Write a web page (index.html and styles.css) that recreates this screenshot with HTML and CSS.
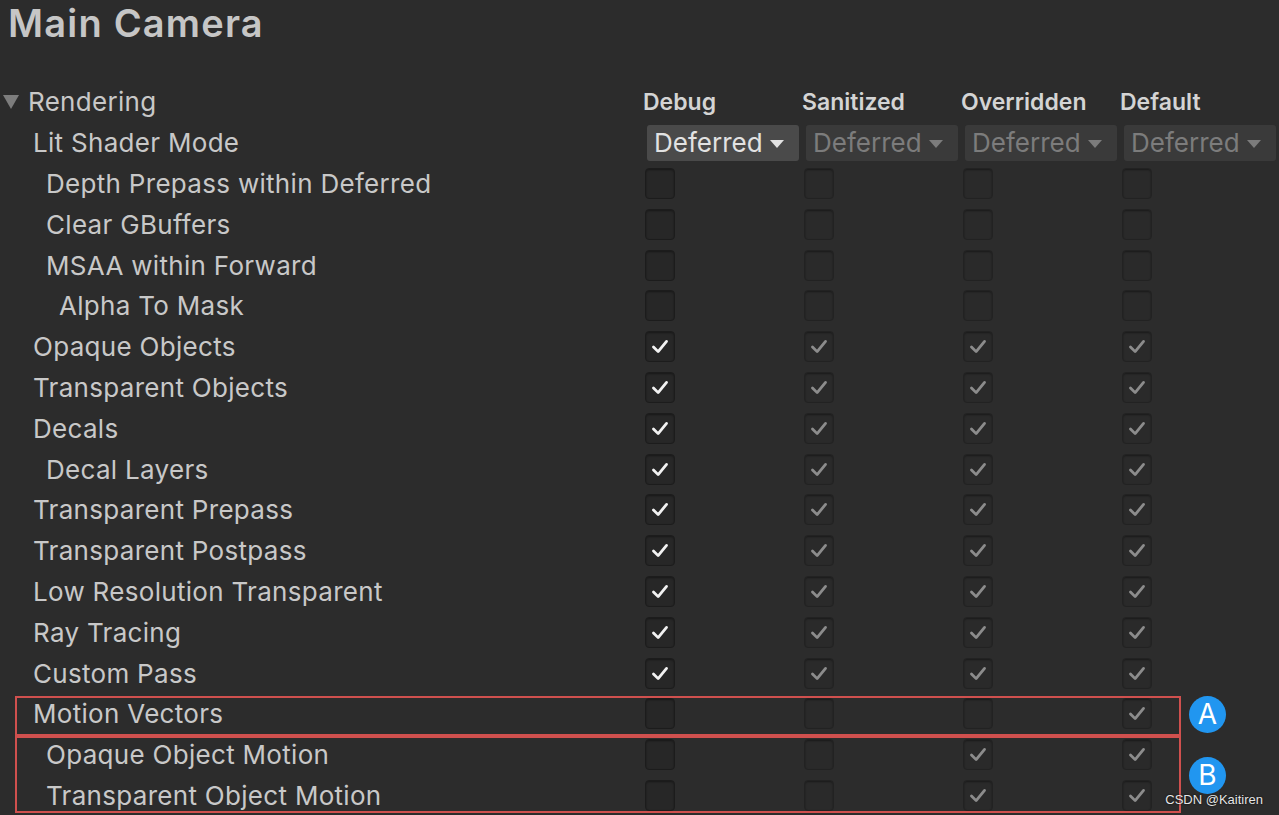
FILE: index.html
```html
<!DOCTYPE html>
<html lang="en">
<head>
  <meta charset="UTF-8" />
  <title>Main Camera - Frame Settings</title>
  <link rel="stylesheet" href="styles.css">
</head>
<body>
  <svg width="0" height="0" class="defs">
    <symbol id="chk" viewBox="0 0 30 30">
      <polyline points="8,15.5 13,20.5 22,9.5" fill="none" stroke-width="3" stroke-linecap="round" stroke-linejoin="round" />
    </symbol>
  </svg>

  <h1 class="title">Main Camera</h1>

  <div class="inspector">
    <div class="row head">
      <div class="label foldout"><span class="fold"></span>Rendering</div>
      <div class="col-title">Debug</div>
      <div class="col-title">Sanitized</div>
      <div class="col-title">Overridden</div>
      <div class="col-title">Default</div>
    </div>

    <div class="row">
      <div class="label lv1">Lit Shader Mode</div>
      <div class="cell"><div class="dropdown">Deferred<span class="caret"></span></div></div>
      <div class="cell"><div class="dropdown off">Deferred<span class="caret"></span></div></div>
      <div class="cell"><div class="dropdown off">Deferred<span class="caret"></span></div></div>
      <div class="cell"><div class="dropdown off">Deferred<span class="caret"></span></div></div>
    </div>

    <div class="row">
      <div class="label lv2">Depth Prepass within Deferred</div>
      <div class="cell"><span class="box"></span></div>
      <div class="cell"><span class="box off"></span></div>
      <div class="cell"><span class="box off"></span></div>
      <div class="cell"><span class="box off"></span></div>
    </div>
    <div class="row">
      <div class="label lv2">Clear GBuffers</div>
      <div class="cell"><span class="box"></span></div>
      <div class="cell"><span class="box off"></span></div>
      <div class="cell"><span class="box off"></span></div>
      <div class="cell"><span class="box off"></span></div>
    </div>
    <div class="row">
      <div class="label lv2">MSAA within Forward</div>
      <div class="cell"><span class="box"></span></div>
      <div class="cell"><span class="box off"></span></div>
      <div class="cell"><span class="box off"></span></div>
      <div class="cell"><span class="box off"></span></div>
    </div>
    <div class="row">
      <div class="label lv3">Alpha To Mask</div>
      <div class="cell"><span class="box"></span></div>
      <div class="cell"><span class="box off"></span></div>
      <div class="cell"><span class="box off"></span></div>
      <div class="cell"><span class="box off"></span></div>
    </div>

    <div class="row">
      <div class="label lv1">Opaque Objects</div>
      <div class="cell"><span class="box"><svg><use href="#chk"/></svg></span></div>
      <div class="cell"><span class="box off"><svg><use href="#chk"/></svg></span></div>
      <div class="cell"><span class="box off"><svg><use href="#chk"/></svg></span></div>
      <div class="cell"><span class="box off"><svg><use href="#chk"/></svg></span></div>
    </div>
    <div class="row">
      <div class="label lv1">Transparent Objects</div>
      <div class="cell"><span class="box"><svg><use href="#chk"/></svg></span></div>
      <div class="cell"><span class="box off"><svg><use href="#chk"/></svg></span></div>
      <div class="cell"><span class="box off"><svg><use href="#chk"/></svg></span></div>
      <div class="cell"><span class="box off"><svg><use href="#chk"/></svg></span></div>
    </div>
    <div class="row">
      <div class="label lv1">Decals</div>
      <div class="cell"><span class="box"><svg><use href="#chk"/></svg></span></div>
      <div class="cell"><span class="box off"><svg><use href="#chk"/></svg></span></div>
      <div class="cell"><span class="box off"><svg><use href="#chk"/></svg></span></div>
      <div class="cell"><span class="box off"><svg><use href="#chk"/></svg></span></div>
    </div>
    <div class="row">
      <div class="label lv2">Decal Layers</div>
      <div class="cell"><span class="box"><svg><use href="#chk"/></svg></span></div>
      <div class="cell"><span class="box off"><svg><use href="#chk"/></svg></span></div>
      <div class="cell"><span class="box off"><svg><use href="#chk"/></svg></span></div>
      <div class="cell"><span class="box off"><svg><use href="#chk"/></svg></span></div>
    </div>
    <div class="row">
      <div class="label lv1">Transparent Prepass</div>
      <div class="cell"><span class="box"><svg><use href="#chk"/></svg></span></div>
      <div class="cell"><span class="box off"><svg><use href="#chk"/></svg></span></div>
      <div class="cell"><span class="box off"><svg><use href="#chk"/></svg></span></div>
      <div class="cell"><span class="box off"><svg><use href="#chk"/></svg></span></div>
    </div>
    <div class="row">
      <div class="label lv1">Transparent Postpass</div>
      <div class="cell"><span class="box"><svg><use href="#chk"/></svg></span></div>
      <div class="cell"><span class="box off"><svg><use href="#chk"/></svg></span></div>
      <div class="cell"><span class="box off"><svg><use href="#chk"/></svg></span></div>
      <div class="cell"><span class="box off"><svg><use href="#chk"/></svg></span></div>
    </div>
    <div class="row">
      <div class="label lv1">Low Resolution Transparent</div>
      <div class="cell"><span class="box"><svg><use href="#chk"/></svg></span></div>
      <div class="cell"><span class="box off"><svg><use href="#chk"/></svg></span></div>
      <div class="cell"><span class="box off"><svg><use href="#chk"/></svg></span></div>
      <div class="cell"><span class="box off"><svg><use href="#chk"/></svg></span></div>
    </div>
    <div class="row">
      <div class="label lv1">Ray Tracing</div>
      <div class="cell"><span class="box"><svg><use href="#chk"/></svg></span></div>
      <div class="cell"><span class="box off"><svg><use href="#chk"/></svg></span></div>
      <div class="cell"><span class="box off"><svg><use href="#chk"/></svg></span></div>
      <div class="cell"><span class="box off"><svg><use href="#chk"/></svg></span></div>
    </div>
    <div class="row">
      <div class="label lv1">Custom Pass</div>
      <div class="cell"><span class="box"><svg><use href="#chk"/></svg></span></div>
      <div class="cell"><span class="box off"><svg><use href="#chk"/></svg></span></div>
      <div class="cell"><span class="box off"><svg><use href="#chk"/></svg></span></div>
      <div class="cell"><span class="box off"><svg><use href="#chk"/></svg></span></div>
    </div>

    <!-- annotated groups -->
    <div class="callout callout-a">
      <span class="badge">A</span>
      <div class="row">
        <div class="label lv1">Motion Vectors</div>
        <div class="cell"><span class="box"></span></div>
        <div class="cell"><span class="box off"></span></div>
        <div class="cell"><span class="box off"></span></div>
        <div class="cell"><span class="box off"><svg><use href="#chk"/></svg></span></div>
      </div>
    </div>
    <div class="callout callout-b">
      <span class="badge">B</span>
      <div class="row">
        <div class="label lv2">Opaque Object Motion</div>
        <div class="cell"><span class="box"></span></div>
        <div class="cell"><span class="box off"></span></div>
        <div class="cell"><span class="box off"><svg><use href="#chk"/></svg></span></div>
        <div class="cell"><span class="box off"><svg><use href="#chk"/></svg></span></div>
      </div>
      <div class="row">
        <div class="label lv2">Transparent Object Motion</div>
        <div class="cell"><span class="box"></span></div>
        <div class="cell"><span class="box off"></span></div>
        <div class="cell"><span class="box off"><svg><use href="#chk"/></svg></span></div>
        <div class="cell"><span class="box off"><svg><use href="#chk"/></svg></span></div>
      </div>
    </div>
  </div>

  <div class="watermark">CSDN @Kaitiren</div>
</body>
</html>
```

FILE: styles.css
```css
:root {
  --bg: #2c2c2c;
  --text: #c8c8c8;
  --row: 40.8px;
  --red: #d0504e;
  --blue: #2196f0;
}

* {
  box-sizing: border-box;
  margin: 0;
  padding: 0;
}

html, body {
  height: 815px;
  overflow: hidden;
}

body {
  background: var(--bg);
  color: var(--text);
  font-family: Inter, 'Noto Sans', sans-serif;
  position: relative;
}

.defs {
  position: absolute;
}

.title {
  font-size: 38px;
  font-weight: 600;
  letter-spacing: 1.2px;
  line-height: 46px;
  padding-left: 8px;
  color: #c6c6c6;
  margin-bottom: 35.6px;
}

.row {
  display: grid;
  grid-template-columns: 643px repeat(4, 159px);
  height: var(--row);
  align-items: center;
}

.label {
  font-size: 26px;
  letter-spacing: 0.3px;
  white-space: nowrap;
}

.lv1 { padding-left: 33px; }
.lv2 { padding-left: 46px; }
.lv3 { padding-left: 59px; }

.foldout {
  display: flex;
  align-items: center;
  padding-left: 3px;
}

.fold {
  width: 0;
  height: 0;
  border-left: 8.5px solid transparent;
  border-right: 8.5px solid transparent;
  border-top: 14px solid #7d7d7d;
  margin-right: 9px;
}

.col-title {
  font-size: 23px;
  font-weight: 600;
  color: #d4d4d4;
}

.cell {
  display: flex;
  align-items: center;
}

.dropdown {
  margin-left: 4px;
  width: 152px;
  height: 36px;
  border-radius: 3px;
  background: #4a4a4a;
  color: #e2e2e2;
  font-size: 26px;
  display: flex;
  align-items: center;
  padding-left: 7px;
  gap: 7px;
}

.dropdown.off {
  background: #3a3a3a;
  color: #7c7c7c;
}

.caret {
  width: 0;
  height: 0;
  border-left: 7px solid transparent;
  border-right: 7px solid transparent;
  border-top: 8px solid #e2e2e2;
  margin-top: 2px;
}

.dropdown.off .caret {
  border-top-color: #7c7c7c;
}

.box {
  margin-left: 2px;
  width: 30px;
  height: 31px;
  border-radius: 4px;
  background: #272727;
  border: 1px solid #1c1c1c;
  box-shadow: inset 0 1px 2px rgba(0, 0, 0, 0.4);
  display: flex;
}

.box.off {
  background: #2a2a2a;
  border-color: #222;
}

.box svg {
  width: 28px;
  height: 29px;
  stroke: #f2f2f2;
}

.box.off svg {
  stroke: #8c8c8c;
}

.callout {
  position: relative;
}

.callout::before {
  content: "";
  position: absolute;
  left: 15px;
  width: 1162px;
  border: 2px solid var(--red);
  pointer-events: none;
}

.callout-a::before {
  top: 2px;
  bottom: -2px;
}

.callout-b::before {
  top: 2px;
  bottom: 3px;
}

.badge {
  position: absolute;
  left: 1189px;
  width: 37px;
  height: 37px;
  border-radius: 50%;
  background: var(--blue);
  color: #fff;
  font-size: 28px;
  line-height: 37px;
  text-align: center;
}

.callout-a .badge { top: 2px; }
.callout-b .badge { top: 23px; }

.watermark {
  position: absolute;
  right: 16px;
  bottom: 8px;
  font-family: 'Liberation Sans', Arial, sans-serif;
  font-size: 13px;
  color: #e6e6e6;
  text-shadow: 0 0 2px #000;
}
```
